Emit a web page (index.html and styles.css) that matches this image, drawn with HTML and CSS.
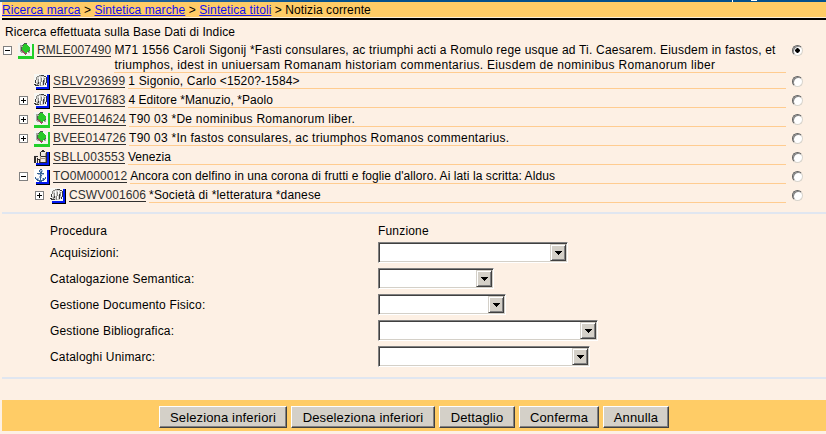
FILE: index.html
```
<!DOCTYPE html>
<html lang="it">
<head>
<meta charset="utf-8">
<title>Notizia corrente</title>
<link rel="stylesheet" href="styles.css">
</head>
<body>
<svg class="defs" width="0" height="0" shape-rendering="crispEdges">
  <symbol id="book" viewBox="0 0 16 16">
    <path fill="#22d02a" d="M14 1h2v15H0v-3h14z"/>
    <path fill="#f4f4f0" d="M0 0h14v13H0z"/>
    <path fill="#a8a8a0" d="M2 2h3v2H2zM2 4h2v5H2zM10 8h2v2h-2zM3 9h3v1H3z"/>
    <path fill="#505850" d="M6 0h3v1H6zM5 1h1v1H5zM4 2h1v1H4zM3 4h1v4H3zM4 8h1v1H4zM11 4h1v4h-1zM10 8h1v1h-1zM5 9h1v1H5z"/>
    <path fill="#28c828" d="M6 1h3v1h1v1h1v1h1v3h-1v1h-1v1H9v1H7V9H6V8H5V7H4V4h1V2h1z"/>
    <path fill="#985060" d="M4 7h1v1h1v1h1v1h2v1H8v1H7v-1H6v-1H5V9H4z"/>
  </symbol>
  <symbol id="head" viewBox="0 0 16 16">
    <path fill="#000" d="M14 1h2v15H2v-2h12z"/>
    <path fill="#0018f0" d="M13 1h2v14H2v-3h11z"/>
    <path fill="#f8f8f4" d="M0 0h13v13H0z"/>
    <path fill="#d0d0cc" d="M3 2h7v2h2v6h-2v2H2V8h1z"/>
    <path fill="#fff" d="M5 3h1v5H5zM8 3h1v4H8zM11 5h1v3h-1zM7 8h1v3H7z"/>
    <path fill="#888884" d="M5 1h5v1H5zM3 2h2v1H3zM2 3h1v3H2zM7 4h1v4H7zM4 5h1v3H4zM10 4h1v4h-1zM6 8h1v4H6zM3 9h1v2H3z"/>
    <path fill="#383838" d="M7 1h3v1H7zM10 2h2v1h-2zM12 3h1v6h-1zM1 6h1v3H1zM9 6h1v5H9zM0 10h2v1H0zM1 11h4v1H1zM4 8h1v2H4zM11 9h1v2h-1z"/>
  </symbol>
  <symbol id="place" viewBox="0 0 16 16">
    <path fill="#000" d="M14 2h2v14H2v-2h12z"/>
    <path fill="#0018f0" d="M13 2h2v13H2v-2h11z"/>
    <path fill="#f0e8e0" d="M0 5h4v8H0zM5 1h8v12H5z"/>
    <path fill="#a89484" d="M6 6h1v6H6zM11 3h1v9h-1zM7 8h4v1H7z"/>
    <path fill="#302c2c" d="M8 0h2v1H8zM7 1h4v1H7zM6 2h1v4H6zM12 2h1v10h-1zM0 6h4v1H0zM0 7h2v6H0zM3 8h1v5H3zM4 9h2v1H4zM5 10h1v3H5zM6 12h7v1H6zM7 6h5v1H7z"/>
  </symbol>
  <symbol id="anchor" viewBox="0 0 16 16">
    <path fill="#000" d="M14 1h2v15H2v-2h12z"/>
    <path fill="#0018f0" d="M13 1h2v14H2v-3h11z"/>
    <path fill="#fff" d="M0 0h13v13H0z"/>
    <path fill="#a8bcd8" d="M5 1h4v2H5zM4 5h6v1H4zM2 9h3v2H2zM8 9h3v2H8zM5 7h3v2H5z"/>
    <path fill="#386494" d="M6 0h2v1H6zM5 1h1v2H5zM7 2h1v3H7zM3 4h3v1H3zM6 3h1v9H6zM8 4h2v1H8zM7 6h1v1H7zM1 8h1v2H1zM2 10h2v1H2zM3 11h7v1H3zM5 12h3v1H5zM9 9h1v2H9zM11 8h1v2h-1zM10 10h1v1h-1z"/>
  </symbol>
</svg>

<div class="banner"><i class="speck"></i><i class="speck wide"></i></div>
<nav class="crumbs"><a>Ricerca marca</a> &gt; <a>Sintetica marche</a> &gt; <a>Sintetica titoli</a> &gt; Notizia corrente</nav>

<main>
  <p class="source">Ricerca effettuata sulla Base Dati di Indice</p>

  <div class="tree">
    <div class="row root">
      <span class="slot"><i class="toggle"></i></span><svg class="icon"><use href="#book"/></svg>
      <span class="code s08">RMLE007490</span>
      <div class="text"><span class="s19">M71 1556 Caroli Sigonij *Fasti consulares, ac triumphi acti a Romulo rege usque ad Ti. Caesarem. Eiusdem in fastos, et</span><br><span class="s31">triumphos, idest in uniuersam Romanam historiam commentarius. Eiusdem de nominibus Romanorum liber</span></div>
      <i class="radio on"></i>
    </div>
    <div class="row l2 tight">
      <span class="slot"></span><svg class="icon"><use href="#head"/></svg>
      <span class="code s24">SBLV293699</span><div class="text s16">1 Sigonio, Carlo &lt;1520?-1584&gt;</div><i class="radio"></i>
    </div>
    <div class="row l2">
      <span class="slot"><i class="toggle plus"></i></span><svg class="icon"><use href="#head"/></svg>
      <span class="code s05">BVEV017683</span><div class="text s05">4 Editore *Manuzio, *Paolo</div><i class="radio"></i>
    </div>
    <div class="row l2">
      <span class="slot"><i class="toggle plus"></i></span><svg class="icon"><use href="#book"/></svg>
      <span class="code s08">BVEE014624</span><div class="text s24">T90 03 *De nominibus Romanorum liber.</div><i class="radio"></i>
    </div>
    <div class="row l2">
      <span class="slot"><i class="toggle plus"></i></span><svg class="icon"><use href="#book"/></svg>
      <span class="code s08">BVEE014726</span><div class="text s24">T90 03 *In fastos consulares, ac triumphos Romanos commentarius.</div><i class="radio"></i>
    </div>
    <div class="row l2">
      <span class="slot"></span><svg class="icon"><use href="#place"/></svg>
      <span class="code s24">SBLL003553</span><div class="text s05">Venezia</div><i class="radio"></i>
    </div>
    <div class="row l2">
      <span class="slot"><i class="toggle"></i></span><svg class="icon"><use href="#anchor"/></svg>
      <span class="code s08">TO0M000012</span><div class="text s07">Ancora con delfino in una corona di frutti e foglie d'alloro. Ai lati la scritta: Aldus</div><i class="radio"></i>
    </div>
    <div class="row l3">
      <span class="slot"><i class="toggle plus"></i></span><svg class="icon"><use href="#head"/></svg>
      <span class="code s08">CSWV001606</span><div class="text s16">*Società di *letteratura *danese</div><i class="radio"></i>
    </div>
  </div>

  <section class="form">
    <div class="line heads"><span class="label">Procedura</span><span>Funzione</span></div>
    <div class="line"><span class="label">Acquisizioni:</span><div class="select w1"><b></b></div></div>
    <div class="line"><span class="label">Catalogazione Semantica:</span><div class="select w2"><b></b></div></div>
    <div class="line"><span class="label">Gestione Documento Fisico:</span><div class="select w3"><b></b></div></div>
    <div class="line"><span class="label">Gestione Bibliografica:</span><div class="select w4"><b></b></div></div>
    <div class="line"><span class="label">Cataloghi Unimarc:</span><div class="select w5"><b></b></div></div>
  </section>

  <footer>
    <button class="b1">Seleziona inferiori</button>
    <button class="b2">Deseleziona inferiori</button>
    <button class="b3">Dettaglio</button>
    <button class="b4">Conferma</button>
    <button class="b5">Annulla</button>
  </footer>
</main>
</body>
</html>
```

FILE: styles.css
```
* { box-sizing: border-box; }
body {
  margin: 0;
  height: 434px;
  overflow: hidden;
  background: #fdf0e4;
  color: #000;
  font: 12px/15px "Liberation Sans", Arial, sans-serif;
}
.defs { position: absolute; }

.banner {
  display: flex;
  gap: 18px;
  height: 2px;
  padding-left: 732px;
  background: linear-gradient(90deg, #2c6496, #1a5c94 30%, #04508c 40%);
}
.speck { width: 1px; height: 2px; background: #fff; }
.speck.wide { width: 6px; height: 1px; }

.crumbs {
  height: 18px;
  margin-left: 2px;
  background: linear-gradient(#ffcc66 15px, #fdf0d8 15px, #fdf0d8 16px, #000 16px);
  line-height: 17px;
  letter-spacing: .09px;
  white-space: nowrap;
}
.crumbs a { color: #1010f0; text-decoration: underline; text-underline-offset: 1px; }

.source { margin: 5px 0 2px 5px; letter-spacing: .11px; }

.row {
  display: flex;
  align-items: flex-start;
  height: 19px;
  padding: 3px 23px 0 3px;
  white-space: nowrap;
}
.row.root { height: 31px; padding-top: 0; }
.row.tight { height: 16px; padding-top: 0; }
.row.l2 { padding-left: 19px; }
.row.l3 { padding-left: 35px; }
.slot { flex: 0 0 15px; }
.toggle {
  display: block;
  width: 9px;
  height: 9px;
  margin-top: 4px;
  border: 1px solid #808080;
  background: linear-gradient(#000, #000) center / 5px 1px no-repeat #fff;
}
.toggle.plus {
  background: linear-gradient(#000, #000) center / 5px 1px no-repeat,
    linear-gradient(#000, #000) center / 1px 5px no-repeat #fff;
}
.icon { flex: 0 0 16px; width: 16px; height: 16px; margin: 1px 3px 0 0; }
.code {
  height: 15px;
  margin-right: 3px;
  box-shadow: inset 0 -1px #303030;
  color: #303030;
  line-height: 17px;
}
.text {
  flex: 1;
  height: 16px;
  padding-top: 1px;
  border-bottom: 1px solid #ffcc90;
}
.root .text { height: 31px; }
.radio {
  width: 11px;
  height: 11px;
  margin: 3px 0 0 6px;
  border: 1px solid;
  border-color: #606060 #d8d4cc #d8d4cc #606060;
  border-radius: 50%;
  background: #fff;
  box-shadow: inset 1px 1px #888;
}
.radio.on { background: radial-gradient(circle, #000 2px, #fff 2.5px); }

.s05 { letter-spacing: .04px; }
.s07 { letter-spacing: .08px; }
.s08 { letter-spacing: .1px; }
.s16 { letter-spacing: .16px; }
.s19 { letter-spacing: .2px; }
.s24 { letter-spacing: .25px; }
.s31 { letter-spacing: .32px; }

.form {
  height: 167px;
  margin: 9px 0 0 2px;
  padding: 10px 0 0 48px;
  border: solid #e0e6f0;
  border-width: 2px 0;
  letter-spacing: .18px;
}
.line { display: flex; align-items: flex-start; height: 26px; }
.line.heads { height: 18px; }
.label { width: 328px; padding-top: 4px; }
.heads .label { padding: 0; }
.select {
  display: flex;
  justify-content: flex-end;
  height: 21px;
  border: 1px solid;
  border-color: #808080 #fff #fff #808080;
  background: #fff;
  box-shadow: inset 1px 1px #404040, inset -1px -1px #d4d0c8;
  padding: 1px;
}
.select b {
  width: 16px;
  border: 1px solid;
  border-color: #d4d0c8 #404040 #404040 #d4d0c8;
  box-shadow: inset 1px 1px #fff, inset -1px -1px #808080;
  background: conic-gradient(#000 0 0) 4px 6px / 7px 1px no-repeat,
    conic-gradient(#000 0 0) 5px 7px / 5px 1px no-repeat,
    conic-gradient(#000 0 0) 6px 8px / 3px 1px no-repeat,
    conic-gradient(#000 0 0) 7px 9px / 1px 1px no-repeat #d4d0c8;
}
.w1 { width: 190px; }
.w2 { width: 116px; }
.w3 { width: 128px; }
.w4 { width: 220px; }
.w5 { width: 212px; }

footer {
  display: flex;
  gap: 4px;
  height: 31px;
  margin: 21px 0 0 2px;
  padding: 6px 0 0 157px;
  background: #ffcc66;
}
button {
  height: 22px;
  padding: 1px 0 0;
  border: 1px solid;
  border-color: #fff #404040 #404040 #fff;
  box-shadow: inset -1px -1px #808080;
  background: #d4d0c8;
  color: #000;
  font: 13px/19px "Liberation Sans", Arial, sans-serif;
  letter-spacing: .14px;
  white-space: nowrap;
}
.b1 { width: 128px; }
.b2 { width: 144px; }
.b3 { width: 76px; }
.b4 { width: 80px; }
.b5 { width: 66px; }
```
